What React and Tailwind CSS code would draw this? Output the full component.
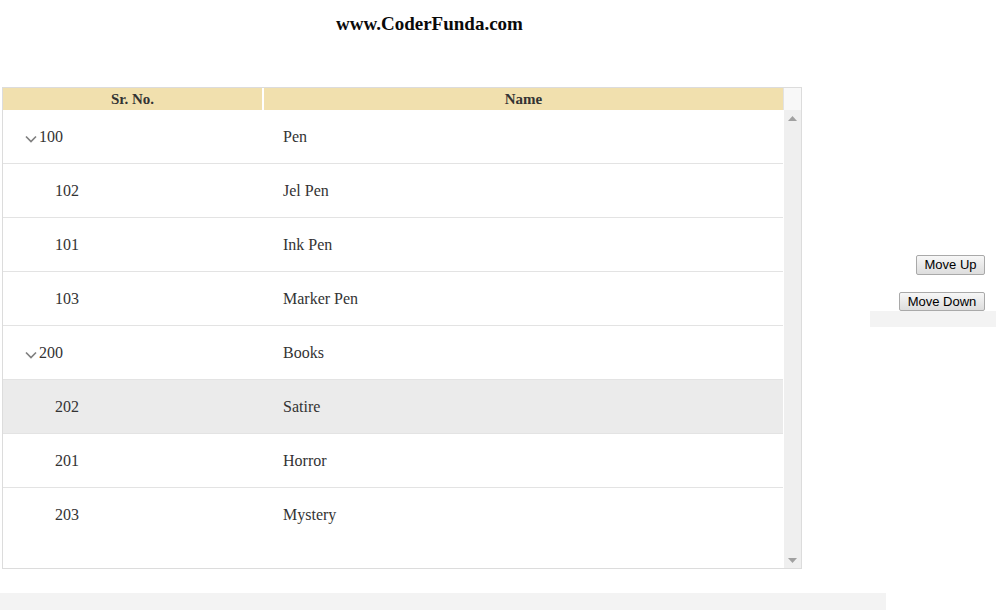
import React from "react";

const rows = [
  { id: "100", name: "Pen", parent: true },
  { id: "102", name: "Jel Pen" },
  { id: "101", name: "Ink Pen" },
  { id: "103", name: "Marker Pen" },
  { id: "200", name: "Books", parent: true },
  { id: "202", name: "Satire", selected: true },
  { id: "201", name: "Horror" },
  { id: "203", name: "Mystery", last: true },
];

function Chevron() {
  return (
    <svg width="12" height="8" viewBox="0 0 12 8" className="mr-[2px] mt-[4px]">
      <polyline points="1,1.5 6,6.5 11,1.5" fill="none" stroke="#808080" strokeWidth="1.7" />
    </svg>
  );
}

function Btn({ children, className }) {
  return (
    <button
      className={
        "border border-[#a9a9a9] rounded-[2px] bg-gradient-to-b from-[#f7f7f7] to-[#dddddd] text-[13px] leading-[16px] text-black px-[6px] " +
        className
      }
      style={{ fontFamily: '"Liberation Sans", Arial, sans-serif' }}
    >
      {children}
    </button>
  );
}

export default function App() {
  return (
    <div
      className="w-[996px] h-[610px] bg-white overflow-hidden"
      style={{ fontFamily: '"Liberation Serif", "Times New Roman", serif' }}
    >
      <div className="w-[859px] text-center pt-[13px] text-[19px] leading-[22px] font-bold text-[#0a0a0a]">
        www.CoderFunda.com
      </div>

      <div className="flex mt-[52px]">
        <div className="ml-[2px] w-[800px] h-[482px] border border-[#dcdcdc] flex flex-col">
          {/* header */}
          <div className="flex h-[22px] text-[15px] font-bold text-[#333] leading-[22px]">
            <div className="w-[259px] bg-[#f1e0ae] text-center">Sr. No.</div>
            <div className="w-[2px] bg-white" />
            <div className="w-[519px] bg-[#f1e0ae] text-center">Name</div>
            <div className="w-[1px] bg-[#e2e2e2]" />
            <div className="w-[17px] bg-[#f8f8f8]" />
          </div>
          {/* body */}
          <div className="flex flex-1">
            <div className="w-[780px] flex flex-col text-[16px] text-[#333]">
              {rows.map((r) => (
                <div
                  key={r.id}
                  className={
                    "flex h-[54px] items-center " +
                    (r.last ? "" : "border-b border-[#e3e3e3] ") +
                    (r.selected ? "bg-[#ebebeb]" : "bg-white")
                  }
                >
                  <div className={"w-[261px] flex items-center " + (r.parent ? "pl-[22px]" : "pl-[52px]")}>
                    {r.parent && <Chevron />}
                    <span>{r.id}</span>
                  </div>
                  <div className="pl-[19px]">{r.name}</div>
                </div>
              ))}
            </div>
            <div className="w-[1px] bg-white" />
            <div className="w-[17px] bg-[#efefef] flex flex-col justify-between items-center pt-[6px] pb-[5px]">
              <svg width="9" height="5" viewBox="0 0 9 5">
                <polygon points="4.5,0 9,5 0,5" fill="#a0a0a0" />
              </svg>
              <svg width="9" height="5" viewBox="0 0 9 5">
                <polygon points="0,0 9,0 4.5,5" fill="#a0a0a0" />
              </svg>
            </div>
          </div>
        </div>

        <div className="flex-1 flex flex-col items-end">
          <Btn className="mt-[168px] mr-[11px] w-[69px] h-[20px]">Move Up</Btn>
          <Btn className="mt-[17px] mr-[11px] w-[86px] h-[19px]">Move Down</Btn>
          <div className="w-[126px] h-[16px] bg-[#f3f3f3]" />
        </div>
      </div>

      <div className="mt-[24px] w-[886px] h-[17px] bg-[#f3f3f3]" />
    </div>
  );
}
